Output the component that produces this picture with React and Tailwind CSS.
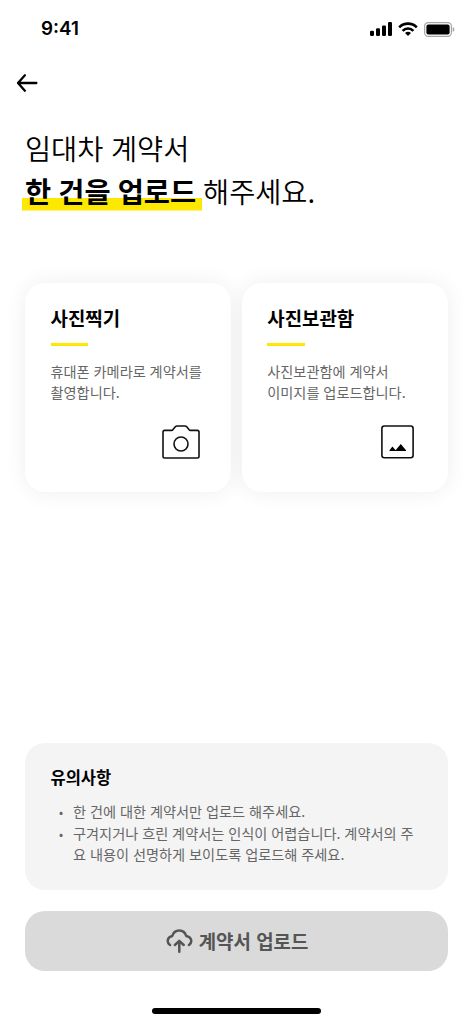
import React from 'react';

const StatusBar = () => {
  return (
    <header className="flex h-[58px] items-center justify-between pl-[41px] pr-[18px]">
      <span className="pt-[1px] font-['Inter'] text-[18.8px] font-semibold leading-none">9:41</span>
      <div className="flex items-center">
        <svg width="22" height="14" viewBox="0 0 22 14" fill="black">
          <rect x="0" y="8.8" width="4" height="5.2" rx="1.2" />
          <rect x="6" y="6.2" width="4" height="7.8" rx="1.2" />
          <rect x="12" y="3.4" width="4" height="10.6" rx="1.2" />
          <rect x="18" y="0" width="4" height="14" rx="1.2" />
        </svg>
        <svg className="ml-[6px]" width="20" height="14" viewBox="0 0 20 14" fill="none" stroke="black" strokeWidth="2.6">
          <path d="M1.2 5.3a12.4 12.4 0 0 1 17.6 0" />
          <path d="M4.6 8.8a7.6 7.6 0 0 1 10.8 0" />
          <path d="M7 11.1a4.3 4.3 0 0 1 6 0L10 14Z" fill="black" stroke="none" />
        </svg>
        <svg className="ml-[6px]" width="31" height="15" viewBox="0 0 31 15">
          <rect x="0.6" y="0.6" width="26.8" height="13.8" rx="3.6" fill="none" stroke="#a6a6a6" strokeWidth="1.2" />
          <rect x="2.4" y="2.4" width="23.2" height="10.2" rx="2" fill="black" />
          <path d="M28.7 5v5c1-.4 1.7-1.4 1.7-2.5S29.7 5.4 28.7 5Z" fill="#a6a6a6" />
        </svg>
      </div>
    </header>
  );
};

const BackIcon = () => (
  <svg width="22" height="20" viewBox="0 0 22 20" fill="none" stroke="black" strokeWidth="2.3" strokeLinecap="round" strokeLinejoin="round">
    <path d="M20.4 10H2M8.9 2.3L2 10l6.9 7.7" />
  </svg>
);

const CameraIcon = () => (
  <svg width="38" height="34" viewBox="0 0 38 34" fill="none" stroke="#111" strokeWidth="1.6" strokeLinejoin="round">
    <path d="M2.7 5.4H9.5Q10.5 5.4 11 4.6L13.3 1.8Q14 1 15 1H23Q24 1 24.7 1.8L27 4.6Q27.5 5.4 28.5 5.4H35.3Q37 5.4 37 7.1V31.3Q37 33 35.3 33H2.7Q1 33 1 31.3V7.1Q1 5.4 2.7 5.4Z" />
    <circle cx="19" cy="19" r="7" />
  </svg>
);

const GalleryIcon = () => (
  <svg width="33" height="34" viewBox="0 0 33 34" fill="none">
    <rect x="0.9" y="1" width="31.2" height="31.7" rx="2.4" stroke="#111" strokeWidth="1.6" />
    <path d="M8.5 26V25.2L11.4 21.6L14 24.6L14.6 25.2L19.8 18.9L25 25.2V26Z" fill="black" />
  </svg>
);

const UploadIcon = () => (
  <svg width="27" height="24" viewBox="0 0 27 24" fill="none" stroke="#555" strokeWidth="2.5" strokeLinecap="round" strokeLinejoin="round">
    <path d="M4 16C.6 13.5 .8 8.2 6.3 7C8.5-.2 18-.2 20.2 7C26.2 8.2 26.4 13.5 23 16" />
    <path d="M13.3 22.8V12.3M8.9 16l4.4-4.1L17.7 16" />
  </svg>
);

const opciones = [
  {
    title: '사진찍기',
    lines: ['휴대폰 카메라로 계약서를', '촬영합니다.'],
    icon: <CameraIcon />,
    iconClass: 'mr-[31px]'
  },
  {
    title: '사진보관함',
    lines: ['사진보관함에 계약서', '이미지를 업로드합니다.'],
    icon: <GalleryIcon />,
    iconClass: 'mr-[34px]'
  }
];

const App = () => {
  return (
    <div className="flex h-[1024px] w-[473px] flex-col overflow-hidden bg-white font-['Noto_Sans_CJK_KR',sans-serif] text-black">
      <StatusBar />

      <button className="ml-[16px] mt-[15px] w-fit" aria-label="뒤로">
        <BackIcon />
      </button>

      {/* Title */}
      <h1 className="ml-[25px] mt-[33px] text-[28.4px] font-[350] leading-[43px] [word-spacing:1.2px]">
        임대차 계약서
        <br />
        <span className="-ml-[3.5px] bg-[linear-gradient(#fce800,#fce800)] bg-[length:100%_12.5px] bg-[position:0_27.5px] bg-no-repeat pl-[3.5px] pr-[5.5px] font-bold [word-spacing:0.7px]">한 건을 업로드</span>
        <span className="ml-[1.5px]">해주세요.</span>
      </h1>

      {/* Option cards */}
      <div className="mx-[25px] mt-[71px] flex gap-[10.5px]">
        {opciones.map((opcion) => (
          <button key={opcion.title} className="flex h-[208.5px] flex-1 flex-col rounded-[20px] bg-white pl-[25.5px] pt-[20px] text-left shadow-[0_0_22px_rgba(0,0,0,0.07)]">
            <h2 className="text-[18.9px] font-bold leading-[30px]">{opcion.title}</h2>
            <div className="mt-[10px] h-[3px] w-[37.5px] bg-[#fce800]" />
            <p className="mt-[14.5px] whitespace-nowrap text-[14.2px] leading-[21.5px] text-[#666] [word-spacing:0.7px]">
              {opcion.lines[0]}
              <br />
              {opcion.lines[1]}
            </p>
            <div className={`mt-[21px] self-end ${opcion.iconClass}`}>{opcion.icon}</div>
          </button>
        ))}
      </div>

      {/* Notice */}
      <section className="mx-[25px] mt-auto h-[147.5px] rounded-[20px] bg-[#f4f4f4] pl-[25.5px] pt-[20px]">
        <h3 className="text-[16.5px] font-bold leading-[28px]">유의사항</h3>
        <ul className="mt-[10.5px] text-[14.2px] leading-[21.5px] text-[#666] [word-spacing:0.7px]">
          <li className="flex">
            <span className="w-[22.5px] pl-[8.5px] text-[12px]">•</span>
            <span>한 건에 대한 계약서만 업로드 해주세요.</span>
          </li>
          <li className="flex">
            <span className="w-[22.5px] pl-[8.5px] text-[12px]">•</span>
            <span className="whitespace-nowrap">
              구겨지거나 흐린 계약서는 인식이 어렵습니다. 계약서의 주
              <br />
              요 내용이 선명하게 보이도록 업로드해 주세요.
            </span>
          </li>
        </ul>
      </section>

      <button className="mx-[25px] mt-[20.5px] flex h-[60.5px] shrink-0 items-center justify-center rounded-[20px] bg-[#dadada] pl-[1px] text-[#555]">
        <UploadIcon />
        <span className="ml-[6px] pt-[2px] text-[18.9px] font-bold leading-none [word-spacing:1px]">계약서 업로드</span>
      </button>

      <div className="mb-[10px] mt-[36.5px] h-[6.5px] w-[169px] shrink-0 self-center rounded-full bg-black" />
    </div>
  );
};

export default App;
